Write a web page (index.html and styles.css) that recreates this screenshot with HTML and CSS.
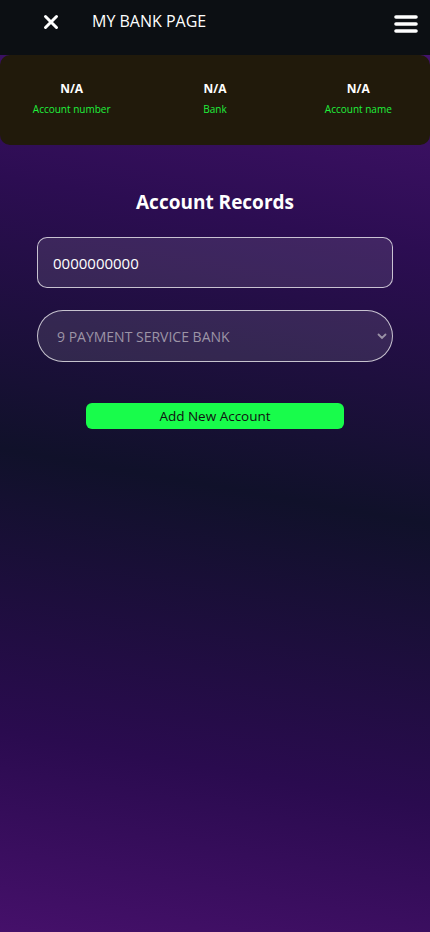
FILE: index.html
```html
<!DOCTYPE html>
<html lang="en">
<head>
<meta charset="utf-8">
<title>My Bank Page</title>
<link rel="stylesheet" href="styles.css">
</head>
<body>
<div class="page">
  <header class="topbar">
    <div class="topbar-left">
      <svg class="close-icon" width="16" height="16" viewBox="0 0 16 16"><path d="M2.5 2.5 L13.5 13.5 M13.5 2.5 L2.5 13.5" stroke="#fff" stroke-width="3" stroke-linecap="round"/></svg>
      <span class="title">MY BANK PAGE</span>
    </div>
    <svg class="menu-icon" width="24" height="20" viewBox="0 0 24 20"><path d="M2 3 H22 M2 10 H22 M2 17 H22" stroke="#fff" stroke-width="3.6" stroke-linecap="round"/></svg>
  </header>

  <section class="summary">
    <div class="summary-item"><span class="value">N/A</span><span class="label">Account number</span></div>
    <div class="summary-item"><span class="value">N/A</span><span class="label">Bank</span></div>
    <div class="summary-item"><span class="value">N/A</span><span class="label">Account name</span></div>
  </section>

  <main class="records">
    <h1 class="records-title">Account Records</h1>
    <input class="field" type="text" value="0000000000">
    <div class="select-wrap">
      <select class="field select">
        <option>9 PAYMENT SERVICE BANK</option>
      </select>
      <svg class="chevron" width="10" height="7" viewBox="0 0 10 7"><path d="M1.5 1.5 L5 5 L8.5 1.5" stroke="#9a92a6" stroke-width="1.8" fill="none" stroke-linecap="round"/></svg>
    </div>
    <button class="add-btn" type="button">Add New Account</button>
  </main>
</div>
</body>
</html>
```

FILE: styles.css
```css
* { box-sizing: border-box; }
html, body { margin: 0; padding: 0; }
body {
  font-family: "Open Sans", "Liberation Sans", sans-serif;
  color: #fff;
  min-height: 932px;
  background: linear-gradient(190deg, #4b1474 0%, #2c0d52 25%, #10112a 52%, #2a0b4f 80%, #45106a 100%);
}
.page { min-height: 932px; display: flex; flex-direction: column; }
.topbar {
  height: 55px;
  background: #0c0f13;
  display: flex;
  align-items: flex-start;
  justify-content: space-between;
  padding: 12px 12px 0 43px;
}
.topbar-left { display: flex; align-items: center; gap: 33px; }
.close-icon { display: block; margin-top: 1px; }
.title { font-size: 16px; line-height: 18px; }
.menu-icon { display: block; margin-top: 2px; }
.summary {
  height: 90px;
  background: #211a0b;
  border-radius: 10px;
  display: grid;
  grid-template-columns: repeat(3, 1fr);
  align-items: center;
  padding: 0 0 3px;
}
.summary-item {
  display: flex;
  flex-direction: column;
  align-items: center;
  gap: 6px;
}
.value { font-size: 12px; font-weight: 700; line-height: 16px; }
.label { font-size: 10px; color: #1ff03c; line-height: 13px; }
.records {
  display: flex;
  flex-direction: column;
  align-items: center;
  padding: 0 37px;
}
.records-title {
  font-size: 19px;
  font-weight: 700;
  margin: 44px 0 0;
  line-height: 26px;
}
.field {
  width: 100%;
  height: 51px;
  border: 1px solid rgba(255,255,255,0.72);
  border-radius: 10px;
  background: rgba(255,255,255,0.1);
  color: #fff;
  font-family: "Open Sans", "Liberation Sans", sans-serif;
  font-size: 15px;
  padding: 0 15px;
  margin-top: 22px;
  outline: none;
}
.select-wrap { position: relative; width: 100%; margin-top: 22px; }
.select {
  margin-top: 0;
  height: 52px;
  border-radius: 26px;
  appearance: none;
  -webkit-appearance: none;
  color: #9c94a6;
  font-size: 14px;
  padding: 0 19px;
}
.chevron { position: absolute; right: 6px; top: 23px; }
.add-btn {
  margin-top: 41px;
  width: 258px;
  height: 26px;
  border: none;
  border-radius: 6px;
  background: #18fc4b;
  color: #111;
  font-family: "Open Sans", "Liberation Sans", sans-serif;
  font-size: 13.5px;
  padding: 0;
}
```
